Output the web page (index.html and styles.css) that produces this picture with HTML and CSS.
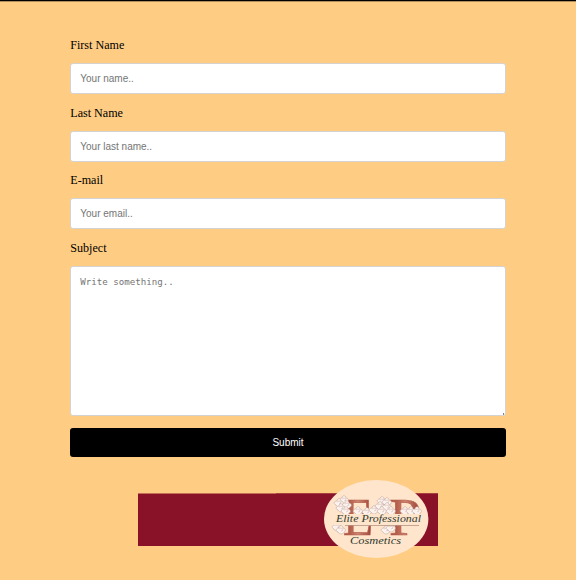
FILE: index.html
```html
<!DOCTYPE html>
<html lang="en">
<head>
<meta charset="utf-8">
<title>Elite Professional Cosmetics</title>
<link rel="stylesheet" href="styles.css">
</head>
<body>
<main class="contact">
  <form class="form">
    <label for="fname">First Name</label>
    <input type="text" id="fname" placeholder="Your name..">
    <label for="lname">Last Name</label>
    <input type="text" id="lname" placeholder="Your last name..">
    <label for="email">E-mail</label>
    <input type="text" id="email" placeholder="Your email..">
    <label for="subject">Subject</label>
    <textarea id="subject" placeholder="Write something.."></textarea>
    <button type="button">Submit</button>
  </form>
  <svg class="logo" viewBox="138 478 300 82" role="img" aria-label="Elite Professional Cosmetics">
    <defs>
      <linearGradient id="copper" x1="0" x2="1">
        <stop offset="0" stop-color="#a9503f"/>
        <stop offset=".25" stop-color="#b5604e"/>
        <stop offset=".5" stop-color="#cf8570"/>
        <stop offset="1" stop-color="#963b30"/>
      </linearGradient>
      <g id="rose">
        <path d="M-3 2C-6 1-5-2-2-2C-2-5 2-5 2-2C5-2 5 2 3 2C3 4-2 5-3 2Z" fill="#fdf3ee" stroke="#b99a95" stroke-width=".5"/>
        <path d="M-2-1Q0-3 2-1Q2 1 0 1" fill="none" stroke="#cbaaa5" stroke-width=".5"/>
      </g>
    </defs>
    <path class="band" d="M138 493.5H276V493.2H438V546H138Z"/>
    <ellipse class="oval" cx="376.2" cy="519" rx="52.2" ry="39"/>
    <g class="initials">
      <text x="343" y="535" textLength="30" lengthAdjust="spacingAndGlyphs">E</text>
      <text x="389" y="535" textLength="32" lengthAdjust="spacingAndGlyphs">P</text>
    </g>
    <g>
      <use href="#rose" x="344" y="500"/><use href="#rose" x="339" y="503"/>
      <use href="#rose" x="347" y="505"/><use href="#rose" x="341" y="508"/>
      <use href="#rose" x="346" y="511"/><use href="#rose" x="358" y="511"/>
      <use href="#rose" x="367" y="512"/><use href="#rose" x="374" y="510"/>
      <use href="#rose" x="382" y="501"/><use href="#rose" x="387" y="502"/>
      <use href="#rose" x="380" y="506"/><use href="#rose" x="387" y="507"/>
      <use href="#rose" x="382" y="511"/><use href="#rose" x="391" y="511"/>
      <use href="#rose" x="405" y="511"/><use href="#rose" x="411" y="511"/>
      <use href="#rose" x="417" y="511"/>
      <use href="#rose" x="337" y="527"/><use href="#rose" x="341" y="530"/>
      <use href="#rose" x="386" y="530"/><use href="#rose" x="391" y="528"/>
    </g>
    <path class="oval" d="M334 514H423V525H334Z"/>
    <path d="M345 525.5H419" stroke="#b59485" stroke-width=".8"/>
    <text class="script" x="336" y="521.5" textLength="85" lengthAdjust="spacingAndGlyphs">Elite Professional</text>
    <text class="script" x="350" y="543.5" textLength="51" lengthAdjust="spacingAndGlyphs">Cosmetics</text>
  </svg>
</main>
</body>
</html>
```
FILE: styles.css
```css
* { box-sizing: border-box; }
body {
  margin: 0;
  background: #ffcc83;
  border-top: 1px solid #000;
  box-shadow: inset 0 1px #b08d5b;
  font: 12.1px/14px "Liberation Serif", serif;
  color: #000;
}
.contact {
  display: flex;
  flex-direction: column;
  align-items: center;
  padding: 37px 70px 0;
}
.form {
  display: flex;
  flex-direction: column;
  width: 435.5px;
}
label { height: 14px; }
input, textarea {
  display: block;
  width: 100%;
  margin: 11px 0 12px;
  padding: 8px 9px;
  border: 1px solid #d5d3d1;
  border-radius: 3px;
  background: #fff;
  outline: 0;
}
input {
  height: 31px;
  margin-bottom: 11.5px;
  font: 10px "Liberation Sans", sans-serif;
}
textarea {
  height: 150px;
  font: 9.15px/14px "DejaVu Sans Mono", monospace;
  resize: none;
  /* small grip mark in the corner */
  background: linear-gradient(#777b88, #777b88) right 1px bottom 0 / 1px 2px no-repeat #fff;
}
::placeholder { color: #757575; opacity: 1; }
button {
  height: 29px;
  padding: 0;
  border: 0;
  border-radius: 3px;
  background: #000;
  color: #fff;
  font: 10px "Liberation Sans", sans-serif;
}
.logo {
  width: 300px;
  height: 82px;
  margin-top: 21px;
}
.band { fill: #891128; }
.oval { fill: #ffe5cb; }
.initials {
  fill: url(#copper);
  stroke: #b5604e;
  stroke-width: .7;
  font: 53px "Liberation Serif", serif;
}
.script {
  fill: #2f3a31;
  font: italic 10.5px "Liberation Serif", serif;
}
```
